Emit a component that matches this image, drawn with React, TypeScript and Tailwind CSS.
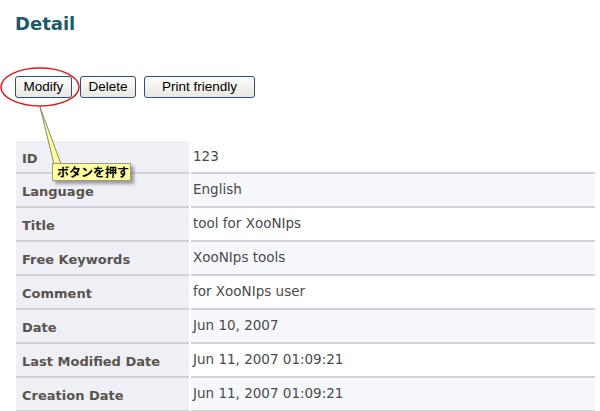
import React from "react";

const rows: [string, string][] = [
  ["ID", "123"],
  ["Language", "English"],
  ["Title", "tool for XooNIps"],
  ["Free Keywords", "XooNIps tools"],
  ["Comment", "for XooNIps user"],
  ["Date", "Jun 10, 2007"],
  ["Last Modified Date", "Jun 11, 2007 01:09:21"],
  ["Creation Date", "Jun 11, 2007 01:09:21"],
];

function Btn({ label, w }: { label: string; w: string }) {
  return (
    <button
      className={`${w} h-[22px] rounded-[3px] border border-[#2d4f7c] bg-gradient-to-b from-[#fcfcfa] to-[#e9e8e2] text-[13.5px] leading-none text-black font-['Liberation_Sans',Arial,sans-serif]`}
    >
      {label}
    </button>
  );
}

export default function App() {
  return (
    <div className="relative w-[600px] h-[411px] overflow-hidden bg-white font-['DejaVu_Sans',Verdana,sans-serif]">
      <h1 className="pl-[15px] pt-[12px] text-[18px] font-bold leading-[24px] text-[#1c5a69]">Detail</h1>

      <div className="flex gap-[8px] pl-[15px] mt-[40px]">
        <Btn label="Modify" w="w-[57px]" />
        <Btn label="Delete" w="w-[56px]" />
        <Btn label="Print friendly" w="w-[111px]" />
      </div>

      <div className="mt-[43px] ml-[16px] w-[579px]">
        {rows.map(([k, v], i) => (
          <div key={k} className={`flex gap-[2px] ${i === 0 ? "h-[33px]" : "h-[34px]"}`}>
            <div className="w-[173px] bg-[#eef0f6] border-b-2 border-[#d3d3d6] pl-[6px] pt-[9px] text-[13px] font-bold text-[#5a534d] leading-[18px]">
              {k}
            </div>
            <div
              className={`flex-1 border-b-2 border-[#d3d3d6] pl-[2px] pt-[6px] text-[13.5px] text-[#4a4a4a] leading-[18px] ${
                i % 2 === 1 ? "bg-[#f7f8fc]" : "bg-white"
              }`}
            >
              {v}
            </div>
          </div>
        ))}
      </div>

      {/* annotation: ellipse + callout */}
      <svg className="absolute left-0 top-0 pointer-events-none" width="140" height="190">
        <ellipse cx="40" cy="87" rx="39" ry="19" fill="none" stroke="#e8141c" strokeWidth="1.5" />
        <polygon points="40,107 54,164 61,164" fill="#ffff99" stroke="#8a8a70" strokeWidth="1" />
      </svg>
      <div className="absolute left-[52px] top-[163px] w-[79px] h-[18px] bg-[#ffffa0] border border-[#9a9a80] shadow-[3px_3px_3px_rgba(0,0,0,0.35)] pl-[4px] text-[12px] font-bold leading-[16px] text-black font-['Noto_Sans_CJK_JP',sans-serif]">
        ボタンを押す
      </div>
    </div>
  );
}
